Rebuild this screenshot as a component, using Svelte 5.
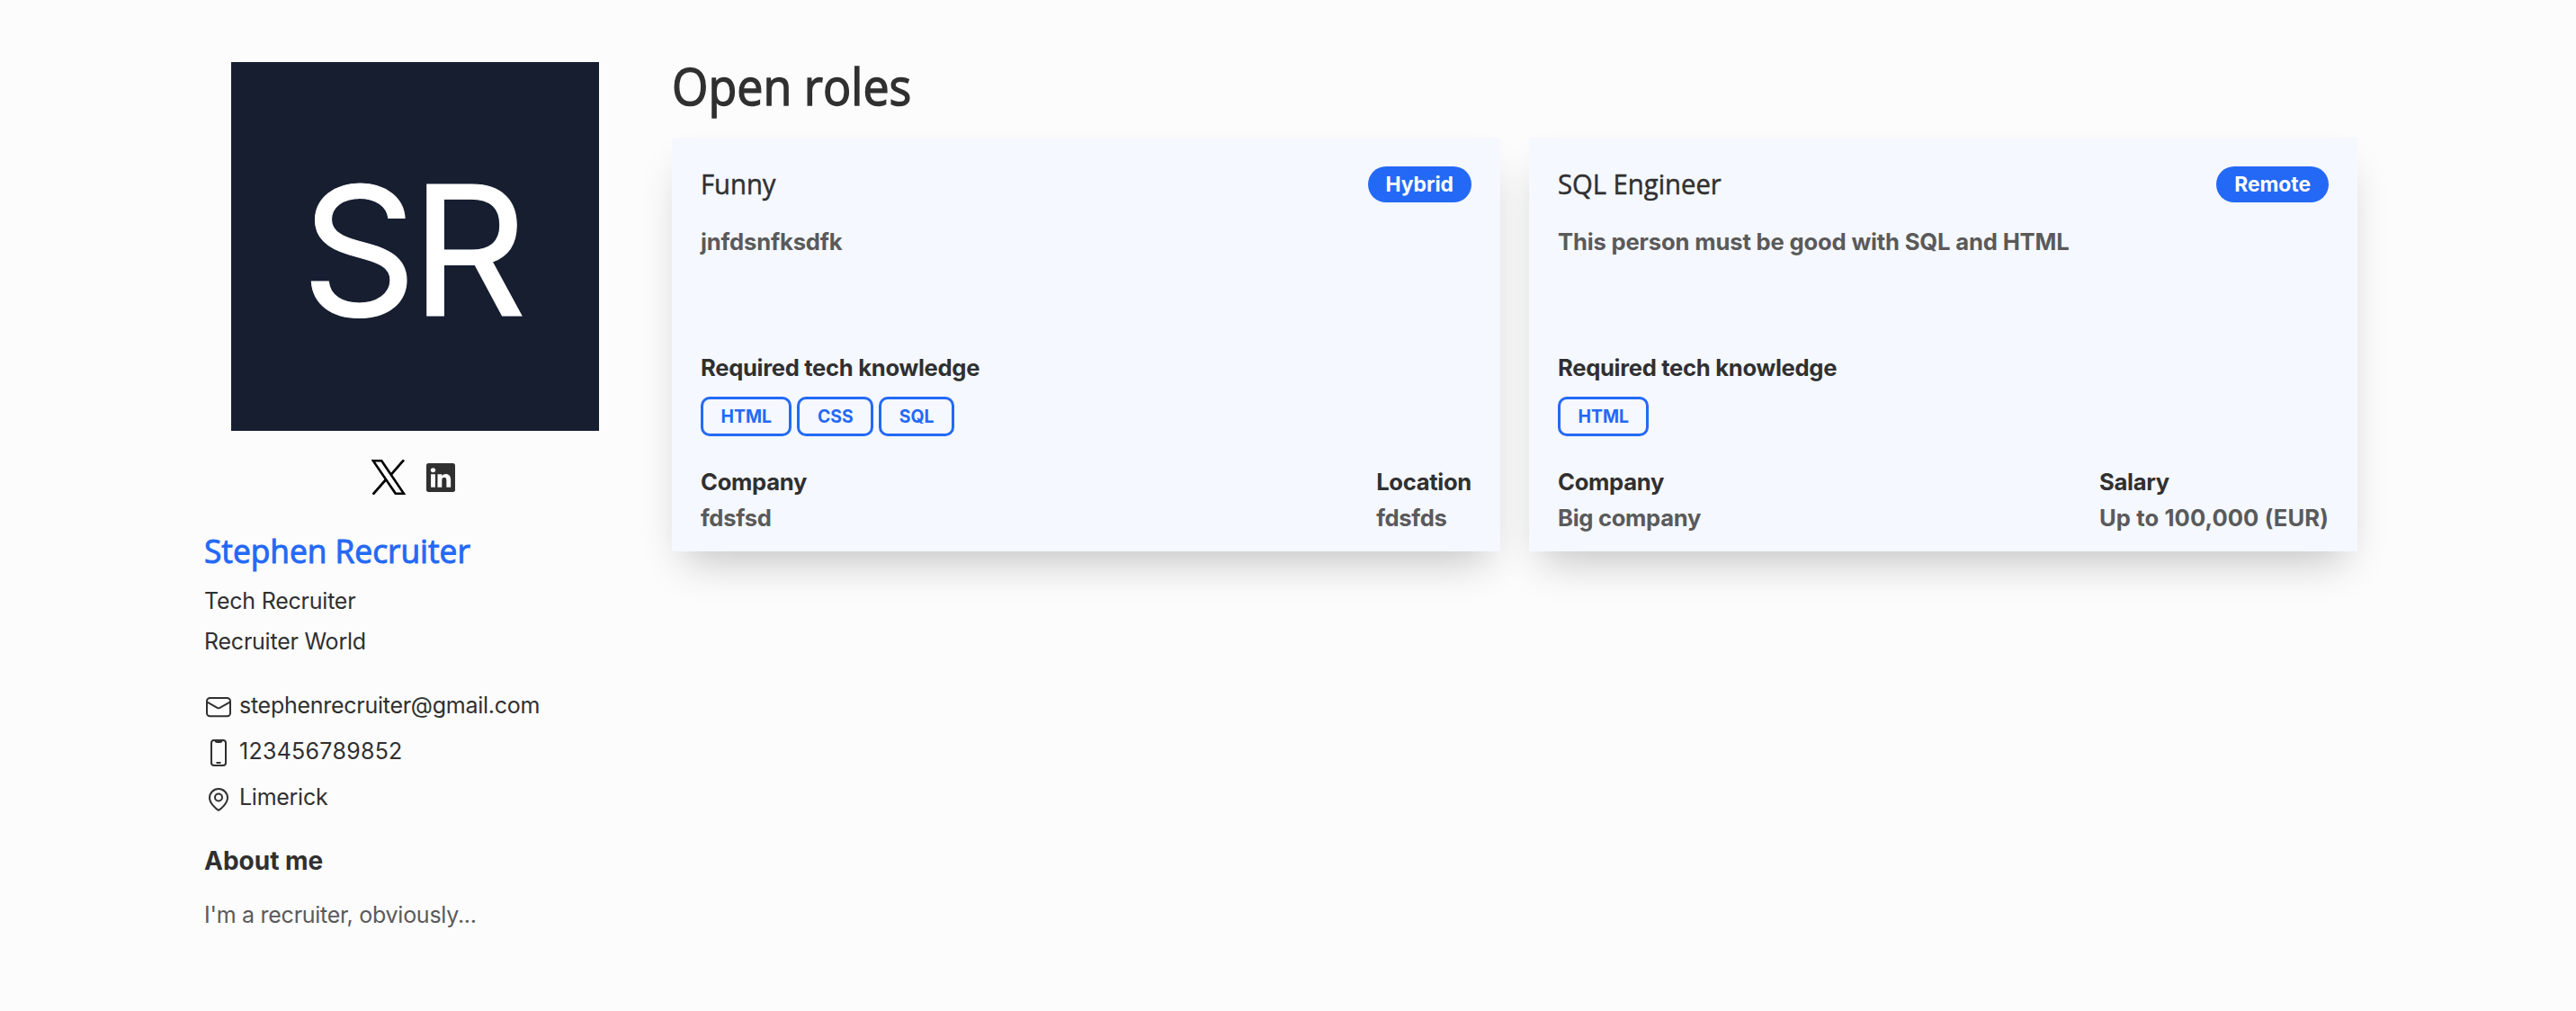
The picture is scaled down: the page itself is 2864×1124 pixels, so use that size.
<script>
  const roles = [
    {
      title: 'Funny',
      mode: 'Hybrid',
      description: 'jnfdsnfksdfk',
      tech: ['HTML', 'CSS', 'SQL'],
      company: 'fdsfsd',
      detail: 'Location',
      value: 'fdsfds'
    },
    {
      title: 'SQL Engineer',
      mode: 'Remote',
      description: 'This person must be good with SQL and HTML',
      tech: ['HTML'],
      company: 'Big company',
      detail: 'Salary',
      value: 'Up to 100,000 (EUR)'
    }
  ];
</script>

<main class="page">
  <aside class="profile">
    <div class="avatar"><span>SR</span></div>

    <div class="social">
      <svg class="x-logo" viewBox="0 0 38 39" aria-label="X">
        <path d="M1.8 1.2H11.2L36 37.8H26.8Z" fill="none" stroke="#000" stroke-width="2.6" />
        <path d="M36 .3 21.6 16.8M16.2 22 1.6 38.7" fill="none" stroke="#000" stroke-width="2.7" />
      </svg>
      <svg class="linkedin" viewBox="0 0 16 16" aria-label="LinkedIn">
        <path fill="#303030" d="M0 1.146C0 .513.526 0 1.175 0h13.65C15.474 0 16 .513 16 1.146v13.708c0 .633-.526 1.146-1.175 1.146H1.175C.526 16 0 15.487 0 14.854zm4.943 12.248V6.169H2.542v7.225zm-1.2-8.212c.837 0 1.358-.554 1.358-1.248-.015-.709-.52-1.248-1.342-1.248S2.4 3.226 2.4 3.934c0 .694.521 1.248 1.327 1.248zm4.908 8.212V9.359c0-.216.016-.432.08-.586.173-.431.568-.878 1.232-.878.869 0 1.216.662 1.216 1.634v3.865h2.401V9.25c0-2.22-1.184-3.252-2.764-3.252-1.274 0-1.845.7-2.165 1.193v.025h-.016l.016-.025V6.169h-2.4c.03.678 0 7.225 0 7.225z" />
      </svg>
    </div>

    <h2 class="name">Stephen Recruiter</h2>
    <p class="line">Tech Recruiter</p>
    <p class="line">Recruiter World</p>

    <ul class="contacts">
      <li>
        <svg viewBox="0 0 30 32"><rect x="2" y="6" width="26" height="20.2" rx="3.5" /><path d="m2.5 10.6 11 6.2q1.5.8 3 0l11-6.2" /></svg>
        <span>stephenrecruiter@gmail.com</span>
      </li>
      <li>
        <svg viewBox="0 0 30 32"><rect x="7" y="2" width="16" height="28" rx="3" /><path d="M11.5 2h7v.6q0 1.4-1.4 1.4h-4.2q-1.4 0-1.4-1.4zM12.5 27h5" /></svg>
        <span class="digits">123456789852</span>
      </li>
      <li>
        <svg viewBox="0 0 30 32"><path d="M15 28.8q-2.5-1.2-6-5.200-4-4.600-4-8.600a10 10 0 0 1 20 0q0 4-4 8.600-3.500 4-6 5.200z" /><circle cx="15" cy="14.500" r="4" /></svg>
        <span>Limerick</span>
      </li>
    </ul>

    <h3 class="about">About me</h3>
    <p class="bio">I'm a recruiter, obviously...</p>
  </aside>

  <section class="roles">
    <h1>Open roles</h1>
    <div class="cards">
      {#each roles as role}
        <article class="card">
          <header>
            <h4>{role.title}</h4>
            <span class="pill">{role.mode}</span>
          </header>
          <p class="description">{role.description}</p>
          <p class="label tech-label">Required tech knowledge</p>
          <div class="tags">
            {#each role.tech as tag}<span class="tag">{tag}</span>{/each}
          </div>
          <footer>
            <div>
              <p class="label">Company</p>
              <p class="value">{role.company}</p>
            </div>
            <div>
              <p class="label">{role.detail}</p>
              <p class="value" class:amount={role.detail === 'Salary'}>{role.value}</p>
            </div>
          </footer>
        </article>
      {/each}
    </div>
  </section>
</main>

<style>
  :global(body) {
    background: #fcfcfc;
    color: #303030;
    font-family: Inter, "Liberation Sans", sans-serif;
  }
  h1, h2, h3, h4, p, ul { margin: 0; padding: 0; }
  h1, .name, h4 {
    font-family: "Open Sans", "Noto Sans", sans-serif;
    transform-origin: left;
    white-space: nowrap;
  }
  .page {
    box-sizing: border-box;
    display: grid;
    grid-template-columns: 470px 1874px;
    gap: 50px;
    width: 2864px;
    height: 1124px;
    padding: 69px 0 0 227px;
  }
  .profile { display: flex; flex-direction: column; }
  .avatar {
    box-sizing: border-box;
    width: 409px;
    height: 410px;
    margin-left: 30px;
    padding-left: 78px;
    background: #161e30;
    color: #fff;
    font-size: 200px;
    line-height: 418px;
    letter-spacing: -6px;
    -webkit-text-stroke: 1px #fff;
  }
  .social {
    display: flex;
    align-items: center;
    gap: 23px;
    margin: 32px 0 0 186px;
  }
  .x-logo { width: 38px; height: 39px; }
  .linkedin { width: 32px; height: 32px; }
  .name {
    margin-top: 38px;
    color: #2469f6;
    font-size: 36px;
    font-weight: 400;
    line-height: 50px;
    -webkit-text-stroke: 1px #2469f6;
    transform: scaleX(0.98);
  }
  .line {
    font-size: 25px;
    line-height: 45px;
    letter-spacing: -0.23px;
  }
  .name + .line { margin-top: 8px; }
  .contacts {
    display: grid;
    gap: 19px;
    margin-top: 32px;
    list-style: none;
  }
  .contacts li {
    display: flex;
    align-items: center;
    gap: 8px;
    height: 32px;
    font-size: 25px;
    letter-spacing: -0.27px;
  }
  .contacts svg {
    width: 30px;
    height: 32px;
    fill: none;
    margin: 4px 0 0 1px;
    stroke: #303030;
    stroke-width: 2;
  }
  .contacts .digits { letter-spacing: 0.27px; }
  .about {
    margin-top: 35px;
    font-size: 28px;
    font-weight: 700;
    line-height: 40px;
  }
  .bio {
    margin-top: 20px;
    color: #5a5a5a;
    font-size: 25px;
    line-height: 40px;
    letter-spacing: -0.27px;
  }
  h1 {
    margin-top: -4px;
    font-size: 56px;
    font-weight: 400;
    line-height: 60px;
    -webkit-text-stroke: 1.4px #303030;
    transform: scaleX(0.928);
  }
  .cards {
    display: grid;
    grid-template-columns: 921px 921px;
    gap: 32px;
    margin-top: 28px;
  }
  .card {
    box-sizing: border-box;
    height: 460px;
    padding: 32px;
    background: #f5f8ff;
    box-shadow: 0 24px 44px -14px rgba(0, 0, 0, 0.23);
  }
  header, footer { display: flex; justify-content: space-between; }
  h4 {
    font-size: 31px;
    font-weight: 400;
    line-height: 38px;
    -webkit-text-stroke: 0.5px #303030;
    transform: scaleX(0.943);
  }
  .pill {
    height: 40px;
    padding: 0 20px;
    border-radius: 20px;
    background: #2469f6;
    color: #fff;
    font-size: 22.8px;
    font-weight: 700;
    line-height: 40px;
  }
  .description, .label, .value {
    font-size: 25.6px;
    font-weight: 700;
    line-height: 40px;
    letter-spacing: -0.3px;
  }
  .description, .value { color: #5a5a5a; }
  .description { margin-top: 24px; letter-spacing: -0.16px; }
  .tech-label { margin-top: 100px; }
  .tags { display: flex; gap: 6px; margin-top: 12px; }
  .tag {
    box-sizing: border-box;
    height: 44px;
    padding: 0 19.5px;
    border: 3px solid #2469f6;
    border-radius: 10px;
    color: #2469f6;
    font-size: 19.4px;
    font-weight: 700;
    line-height: 38px;
  }
  footer { margin-top: 31px; }
  footer .amount { letter-spacing: 0.1px; }
</style>
